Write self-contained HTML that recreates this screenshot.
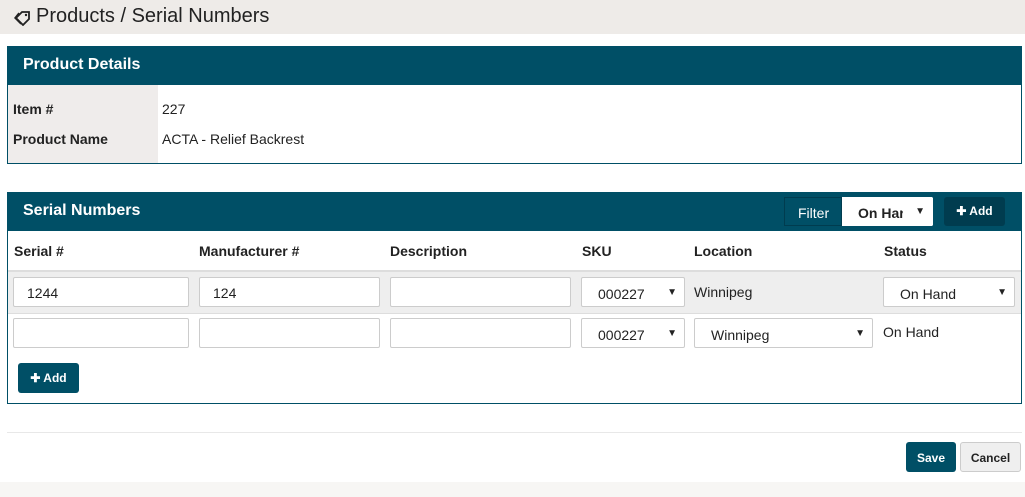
<!DOCTYPE html>
<html><head><meta charset="utf-8"><style>
*{box-sizing:border-box;margin:0;padding:0}
body{width:1025px;height:497px;position:relative;background:#fff;font-family:"Liberation Sans",Arial,sans-serif;font-size:14px;color:#222;overflow:hidden}
.a{position:absolute}
.top{left:0;top:0;width:1025px;height:34px;background:#eeebe8}
.title{left:36px;top:5px;font-size:20px;color:#222}
.panel{border:1px solid #004f66;background:#fff}
.ph{background:#004f66;color:#fff;font-weight:bold;font-size:16px}
.b{font-weight:bold}
.inp{position:absolute;height:30px;border:1px solid #ccc;border-radius:2px;background:#fff;font-size:14px;padding:7px 0 0 13px}
.sel:after{content:"▼";position:absolute;right:7px;top:9px;font-size:10px;color:#222}
.btn{position:absolute;border-radius:3px;color:#fff;font-weight:bold;font-size:12px;text-align:center}
</style></head><body>
<div class="a top"></div>
<svg class="a" style="left:14px;top:10px" width="18" height="16" viewBox="0 0 18 16"><path d="M8 2h7v7l-6 6-7-7z" fill="none" stroke="#222" stroke-width="1.8"/><path d="M5 3L1 8l6 6" fill="none" stroke="#222" stroke-width="1.5"/><circle cx="12" cy="5" r="1.2" fill="#222"/></svg>
<div class="a title">Products / Serial Numbers</div>

<div class="a panel" style="left:7px;top:46px;width:1015px;height:118px"></div>
<div class="a ph" style="left:7px;top:46px;width:1015px;height:39px;padding:10px 0 0 16px">Product Details</div>
<div class="a" style="left:8px;top:85px;width:150px;height:78px;background:#efeceb"></div>
<div class="a b" style="left:13px;top:101px">Item #</div>
<div class="a" style="left:162px;top:101px">227</div>
<div class="a b" style="left:13px;top:131px">Product Name</div>
<div class="a" style="left:162px;top:131px">ACTA - Relief Backrest</div>

<div class="a panel" style="left:7px;top:192px;width:1015px;height:212px"></div>
<div class="a ph" style="left:7px;top:192px;width:1015px;height:39px;padding:10px 0 0 16px">Serial Numbers</div>
<div class="a" style="left:784px;top:197px;width:58px;height:29px;border:1px solid #003c4f;background:#004f66;color:#fff;padding:7px 0 0 13px">Filter</div>
<div class="a" style="left:842px;top:197px;width:91px;height:29px;background:#fff;border-radius:0 2px 2px 0;padding:8px 0 0 16px;font-weight:bold;overflow:hidden;white-space:nowrap">On Har<span style="position:absolute;left:61px;top:0;width:30px;height:29px;background:#fff"></span><span style="position:absolute;right:8px;top:9px;font-size:10px">▼</span></div>
<div class="btn" style="left:944px;top:197px;width:61px;height:29px;background:#003c4f;padding-top:7px">✚ Add</div>

<div class="a b" style="left:14px;top:243px">Serial #</div>
<div class="a b" style="left:199px;top:243px">Manufacturer #</div>
<div class="a b" style="left:390px;top:243px">Description</div>
<div class="a b" style="left:582px;top:243px">SKU</div>
<div class="a b" style="left:694px;top:243px">Location</div>
<div class="a b" style="left:884px;top:243px">Status</div>
<div class="a" style="left:8px;top:270px;width:1013px;height:2px;background:#ddd"></div>
<div class="a" style="left:8px;top:272px;width:1013px;height:41px;background:#eeeeee"></div>
<div class="a" style="left:8px;top:313px;width:1013px;height:1px;background:#ddd"></div>

<div class="inp" style="left:13px;top:277px;width:176px">1244</div>
<div class="inp" style="left:199px;top:277px;width:181px">124</div>
<div class="inp" style="left:390px;top:277px;width:181px"></div>
<div class="inp sel" style="left:581px;top:277px;width:104px;padding-left:16px;padding-top:8px">000227</div>
<div class="a" style="left:694px;top:284px">Winnipeg</div>
<div class="inp sel" style="left:883px;top:277px;width:132px;padding-left:16px;padding-top:8px">On Hand</div>

<div class="inp" style="left:13px;top:318px;width:176px"></div>
<div class="inp" style="left:199px;top:318px;width:181px"></div>
<div class="inp" style="left:390px;top:318px;width:181px"></div>
<div class="inp sel" style="left:581px;top:318px;width:104px;padding-left:16px;padding-top:8px">000227</div>
<div class="inp sel" style="left:694px;top:318px;width:179px;padding-left:16px;padding-top:8px">Winnipeg</div>
<div class="a" style="left:883px;top:324px">On Hand</div>

<div class="btn" style="left:18px;top:363px;width:61px;height:30px;background:#004f66;padding-top:8px">✚ Add</div>

<div class="a" style="left:7px;top:432px;width:1015px;height:1px;background:#e8e8e8"></div>
<div class="btn" style="left:906px;top:442px;width:50px;height:30px;background:#004f66;padding-top:9px">Save</div>
<div class="btn" style="left:960px;top:442px;width:61px;height:30px;background:#efefef;border:1px solid #ccc;color:#222;padding-top:8px">Cancel</div>
<div class="a" style="left:0;top:482px;width:1025px;height:15px;background:#f7f6f4"></div>
</body></html>
